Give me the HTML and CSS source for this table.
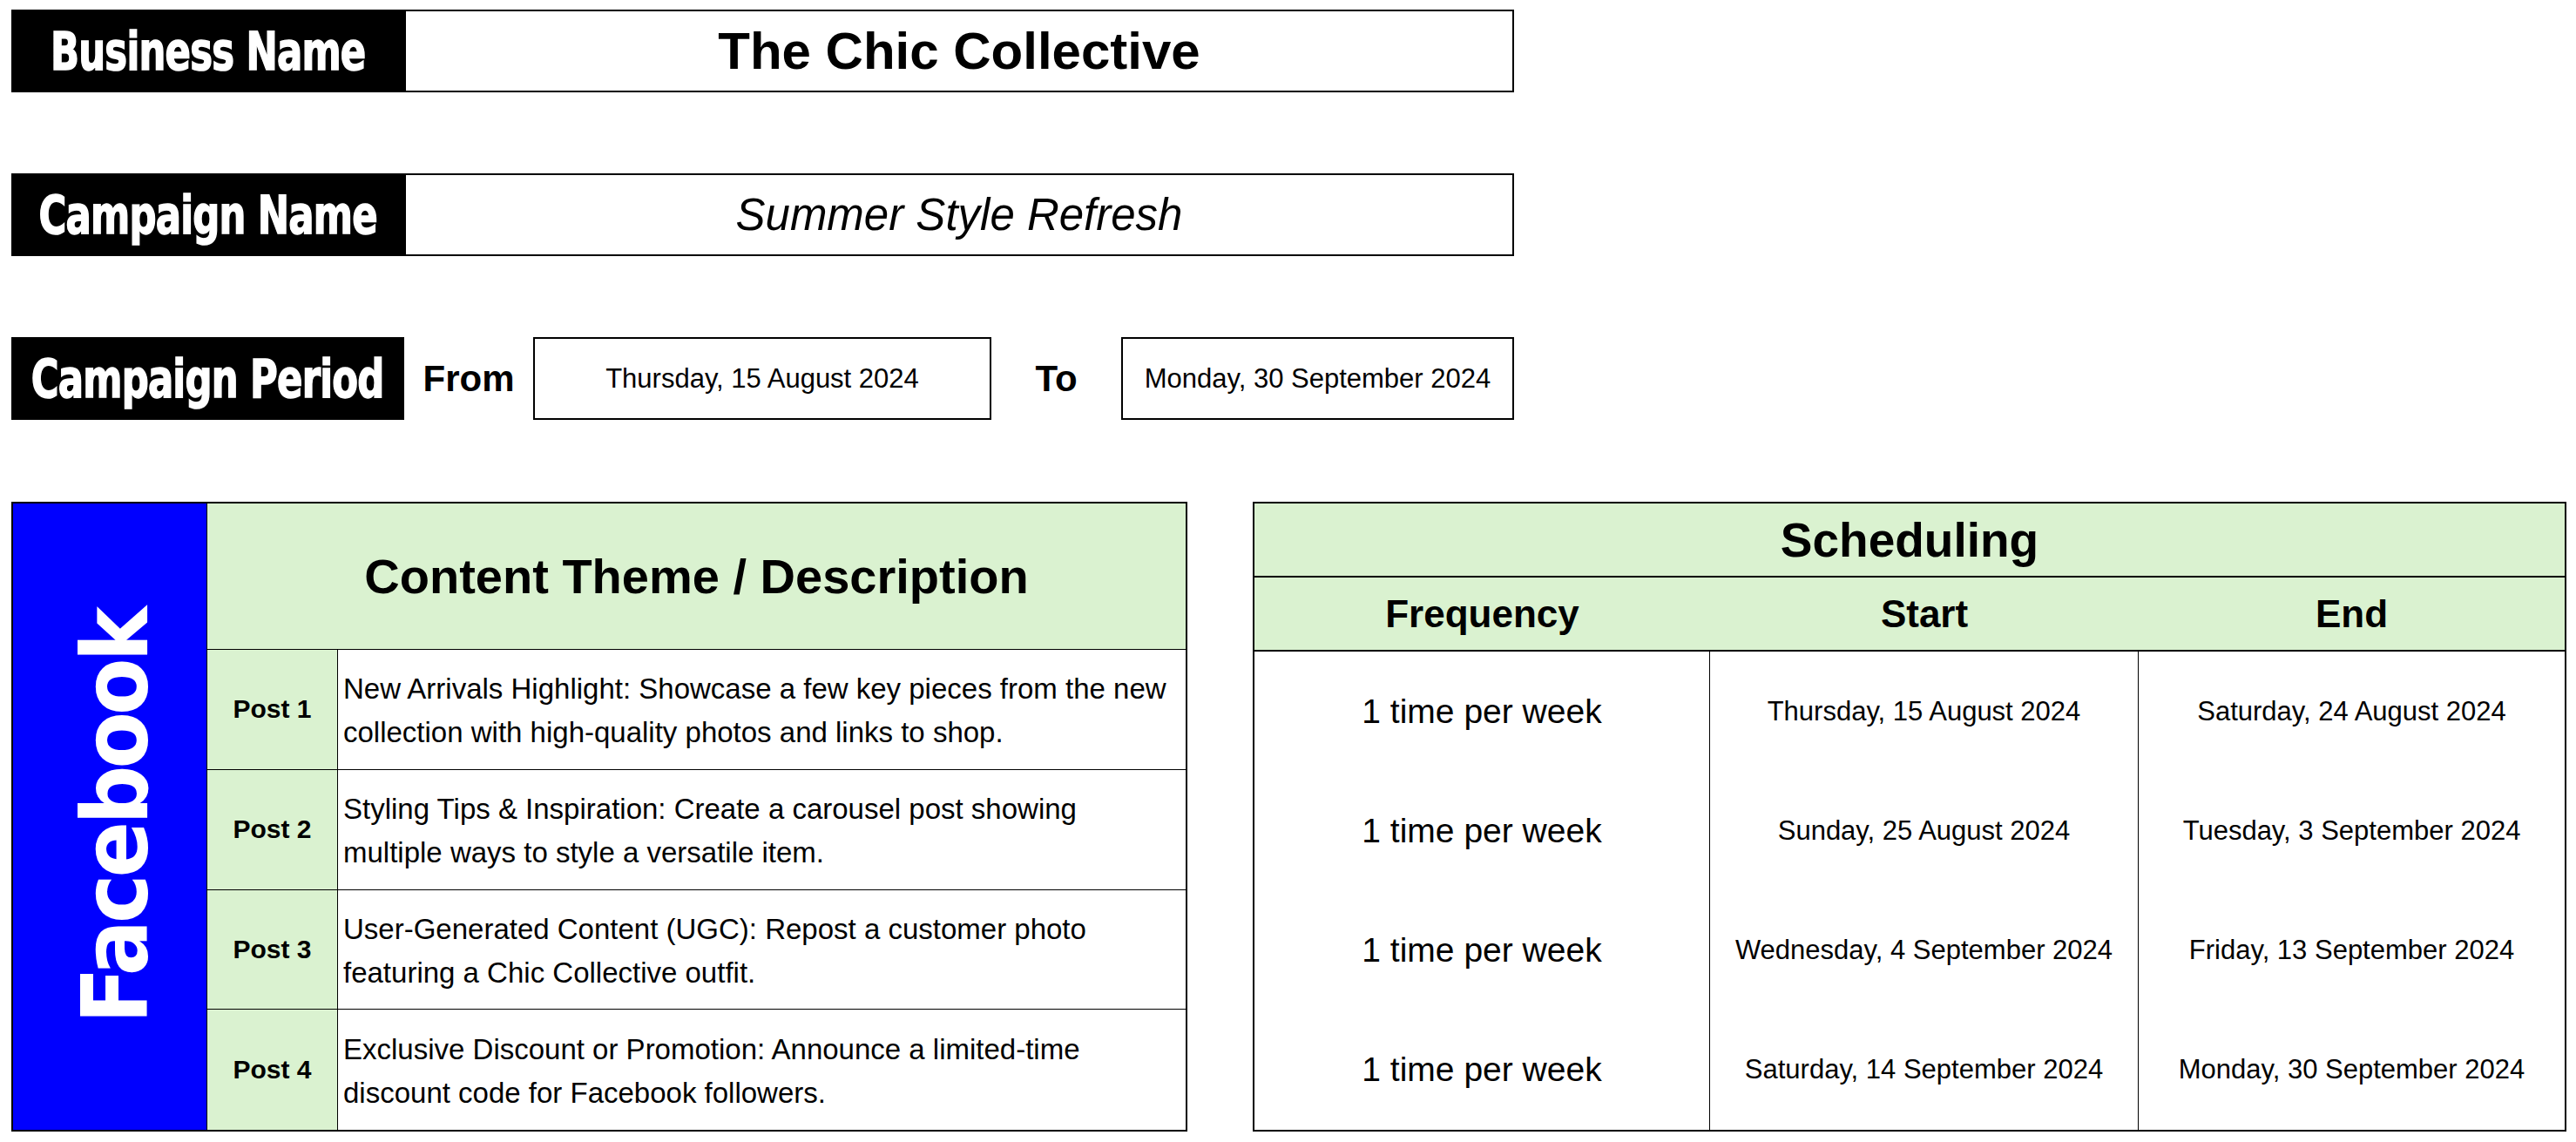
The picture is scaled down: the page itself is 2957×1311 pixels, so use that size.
FILE: index.html
```html
<!DOCTYPE html>
<html lang="en">
<head>
<meta charset="utf-8">
<title>Campaign Plan - The Chic Collective</title>
<link rel="stylesheet" href="styles.css">
</head>
<body>
<div class="page">
  <div class="top">
    <div class="row">
      <div class="label"><span class="label-text">Business Name</span></div>
      <div class="value biz">The Chic Collective</div>
    </div>
    <div class="row">
      <div class="label"><span class="label-text">Campaign Name</span></div>
      <div class="value camp">Summer Style Refresh</div>
    </div>
    <div class="row">
      <div class="label"><span class="label-text">Campaign Period</span></div>
      <div class="word from-word">From</div>
      <div class="date-box from-box">Thursday, 15 August 2024</div>
      <div class="word to-word">To</div>
      <div class="date-box to-box">Monday, 30 September 2024</div>
    </div>
  </div>

  <div class="bottom">
    <div class="content-table">
      <div class="platform"><span class="platform-text">Facebook</span></div>
      <div class="content-head">Content Theme / Description</div>
      <div class="post">Post 1</div>
      <div class="desc">New Arrivals Highlight: Showcase a few key pieces from the new<br>collection with high-quality photos and links to shop.</div>
      <div class="post">Post 2</div>
      <div class="desc">Styling Tips &amp; Inspiration: Create a carousel post showing<br>multiple ways to style a versatile item.</div>
      <div class="post">Post 3</div>
      <div class="desc">User-Generated Content (UGC): Repost a customer photo<br>featuring a Chic Collective outfit.</div>
      <div class="post last">Post 4</div>
      <div class="desc last">Exclusive Discount or Promotion: Announce a limited-time<br>discount code for Facebook followers.</div>
    </div>

    <div class="schedule-table">
      <div class="sched-title">Scheduling</div>
      <div class="sched-head">Frequency</div>
      <div class="sched-head">Start</div>
      <div class="sched-head">End</div>

      <div class="freq">1 time per week</div>
      <div class="sdate">Thursday, 15 August 2024</div>
      <div class="sdate end">Saturday, 24 August 2024</div>

      <div class="freq">1 time per week</div>
      <div class="sdate">Sunday, 25 August 2024</div>
      <div class="sdate end">Tuesday, 3 September 2024</div>

      <div class="freq">1 time per week</div>
      <div class="sdate">Wednesday, 4 September 2024</div>
      <div class="sdate end">Friday, 13 September 2024</div>

      <div class="freq">1 time per week</div>
      <div class="sdate">Saturday, 14 September 2024</div>
      <div class="sdate end">Monday, 30 September 2024</div>
    </div>
  </div>
</div>
</body>
</html>
```

FILE: styles.css
```css
* { box-sizing: border-box; }

body {
  margin: 0;
  background: #ffffff;
  color: #000000;
  font-family: "Liberation Sans", Arial, sans-serif;
}

.page {
  padding: 11px 0 0 13px;
}

/* ---------- top info rows ---------- */
.top {
  display: flex;
  flex-direction: column;
  gap: 93px;
  width: 1725px;
}

.row {
  display: flex;
  height: 95px;
}

.label {
  width: 451px;
  flex: none;
  background: #000000;
  color: #ffffff;
  display: flex;
  align-items: center;
  justify-content: center;
  overflow: hidden;
}

.label-text {
  display: inline-block;
  font-family: "DejaVu Sans Condensed", "DejaVu Sans", sans-serif;
  font-weight: bold;
  font-size: 61px;
  line-height: 1;
  letter-spacing: -1px;
  -webkit-text-stroke: 1.5px #ffffff;
  white-space: nowrap;
  transform: scaleX(0.79);
}

.value {
  flex: 1;
  border: 2px solid #000000;
  display: flex;
  align-items: center;
  justify-content: center;
  white-space: nowrap;
}

.biz {
  font-weight: bold;
  font-size: 60px;
}

.camp {
  font-style: italic;
  font-size: 51px;
}

.word {
  flex: none;
  display: flex;
  align-items: center;
  justify-content: center;
  font-weight: bold;
  font-size: 42px;
}

.from-word { width: 148px; }
.to-word { width: 149px; }

.date-box {
  flex: none;
  border: 2px solid #000000;
  display: flex;
  align-items: center;
  justify-content: center;
  font-size: 31px;
  white-space: nowrap;
}

.from-box { width: 526px; }
.to-box { width: 451px; }

/* ---------- bottom tables ---------- */
.bottom {
  display: flex;
  gap: 75px;
  margin-top: 94px;
}

.content-table {
  width: 1350px;
  height: 723px;
  border: 2px solid #000000;
  display: grid;
  grid-template-columns: 223px 150px 1fr;
  grid-template-rows: 168px repeat(4, 1fr);
}

.platform {
  grid-row: 1 / 6;
  grid-column: 1;
  background: #0000ff;
  border-right: 1px solid #000000;
  display: flex;
  align-items: center;
  justify-content: center;
  padding-left: 14px;
}

.platform-text {
  writing-mode: vertical-rl;
  transform: rotate(180deg);
  color: #ffffff;
  font-family: "DejaVu Sans Condensed", "DejaVu Sans", sans-serif;
  font-weight: bold;
  font-size: 106px;
  letter-spacing: -4px;
  line-height: 1;
  white-space: nowrap;
}

.content-head {
  grid-column: 2 / 4;
  background: #daf2d0;
  border-bottom: 1px solid #000000;
  display: flex;
  align-items: center;
  justify-content: center;
  font-weight: bold;
  font-size: 56px;
  white-space: nowrap;
}

.post {
  background: #daf2d0;
  border-right: 1px solid #000000;
  border-bottom: 1px solid #000000;
  display: flex;
  align-items: center;
  justify-content: center;
  font-weight: bold;
  font-size: 30px;
}

.desc {
  border-bottom: 1px solid #000000;
  display: flex;
  align-items: center;
  padding-left: 6px;
  padding-top: 4px;
  font-size: 33px;
  line-height: 50px;
  white-space: nowrap;
}

.post.last,
.desc.last {
  border-bottom: none;
}

.schedule-table {
  width: 1508px;
  height: 723px;
  border: 2px solid #000000;
  display: grid;
  grid-template-columns: 523px 492px 1fr;
  grid-template-rows: 85px 85px repeat(4, 1fr);
}

.sched-title {
  grid-column: 1 / 4;
  background: #daf2d0;
  border-bottom: 2px solid #000000;
  display: flex;
  align-items: center;
  justify-content: center;
  font-weight: bold;
  font-size: 55px;
}

.sched-head {
  background: #daf2d0;
  border-bottom: 2px solid #000000;
  display: flex;
  align-items: center;
  justify-content: center;
  font-weight: bold;
  font-size: 44px;
}

.freq,
.sdate {
  display: flex;
  align-items: center;
  justify-content: center;
  border-right: 1px solid #000000;
  white-space: nowrap;
}

.freq { font-size: 39px; }
.sdate { font-size: 31px; }
.sdate.end { border-right: none; }
```
